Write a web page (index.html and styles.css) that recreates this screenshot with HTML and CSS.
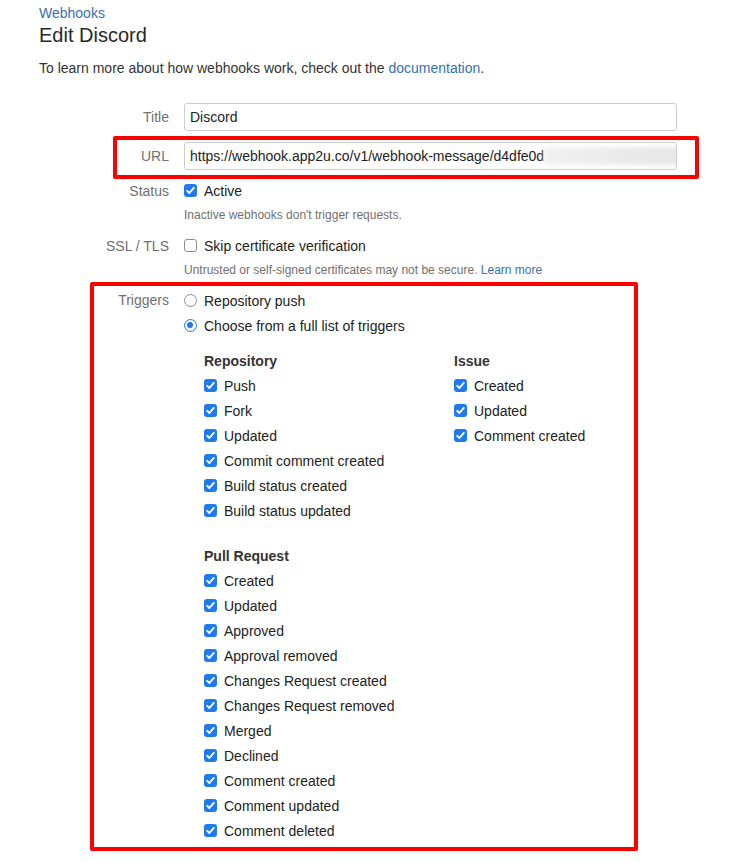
FILE: index.html
```html
<!DOCTYPE html>
<html>
<head>
<meta charset="utf-8">
<link rel="stylesheet" href="styles.css">
</head>
<body>
<div class="page">
  <a class="crumb" href="#">Webhooks</a>
  <h1 class="title">Edit Discord</h1>
  <p class="intro">To learn more about how webhooks work, check out the <a href="#">documentation</a>.</p>

  <div class="form">
    <div class="row">
      <div class="label field-label">Title</div>
      <div class="field"><div class="input">Discord</div></div>
    </div>
    <div class="row row-url highlight">
      <div class="label field-label">URL</div>
      <div class="field"><div class="input">https://webhook.app2u.co/v1/webhook-message/d4dfe0d<span class="blur"></span></div></div>
    </div>
    <div class="row row-status">
      <div class="label">Status</div>
      <div class="field">
        <div class="opt"><span class="cb on"><svg viewBox="0 0 13 13"><path d="M3.2 6.8 L5.4 9 L9.8 3.9" /></svg></span>Active</div>
        <div class="help">Inactive webhooks don't trigger requests.</div>
      </div>
    </div>
    <div class="row row-ssl">
      <div class="label">SSL / TLS</div>
      <div class="field">
        <div class="opt"><span class="cb"></span>Skip certificate verification</div>
        <div class="help">Untrusted or self-signed certificates may not be secure. <a href="#">Learn more</a></div>
      </div>
    </div>
    <div class="row row-triggers highlight">
      <div class="label trig-label">Triggers</div>
      <div class="field">
        <div class="item"><span class="radio"></span>Repository push</div>
        <div class="item"><span class="radio on"></span>Choose from a full list of triggers</div>
        <div class="groups">
          <div class="group">
            <div class="item head">Repository</div>
            <div class="item"><span class="cb on"><svg viewBox="0 0 13 13"><path d="M3.2 6.8 L5.4 9 L9.8 3.9" /></svg></span>Push</div>
            <div class="item"><span class="cb on"><svg viewBox="0 0 13 13"><path d="M3.2 6.8 L5.4 9 L9.8 3.9" /></svg></span>Fork</div>
            <div class="item"><span class="cb on"><svg viewBox="0 0 13 13"><path d="M3.2 6.8 L5.4 9 L9.8 3.9" /></svg></span>Updated</div>
            <div class="item"><span class="cb on"><svg viewBox="0 0 13 13"><path d="M3.2 6.8 L5.4 9 L9.8 3.9" /></svg></span>Commit comment created</div>
            <div class="item"><span class="cb on"><svg viewBox="0 0 13 13"><path d="M3.2 6.8 L5.4 9 L9.8 3.9" /></svg></span>Build status created</div>
            <div class="item"><span class="cb on"><svg viewBox="0 0 13 13"><path d="M3.2 6.8 L5.4 9 L9.8 3.9" /></svg></span>Build status updated</div>
          </div>
          <div class="group">
            <div class="item head">Issue</div>
            <div class="item"><span class="cb on"><svg viewBox="0 0 13 13"><path d="M3.2 6.8 L5.4 9 L9.8 3.9" /></svg></span>Created</div>
            <div class="item"><span class="cb on"><svg viewBox="0 0 13 13"><path d="M3.2 6.8 L5.4 9 L9.8 3.9" /></svg></span>Updated</div>
            <div class="item"><span class="cb on"><svg viewBox="0 0 13 13"><path d="M3.2 6.8 L5.4 9 L9.8 3.9" /></svg></span>Comment created</div>
          </div>
          <div class="group group-pr">
            <div class="item head">Pull Request</div>
            <div class="item"><span class="cb on"><svg viewBox="0 0 13 13"><path d="M3.2 6.8 L5.4 9 L9.8 3.9" /></svg></span>Created</div>
            <div class="item"><span class="cb on"><svg viewBox="0 0 13 13"><path d="M3.2 6.8 L5.4 9 L9.8 3.9" /></svg></span>Updated</div>
            <div class="item"><span class="cb on"><svg viewBox="0 0 13 13"><path d="M3.2 6.8 L5.4 9 L9.8 3.9" /></svg></span>Approved</div>
            <div class="item"><span class="cb on"><svg viewBox="0 0 13 13"><path d="M3.2 6.8 L5.4 9 L9.8 3.9" /></svg></span>Approval removed</div>
            <div class="item"><span class="cb on"><svg viewBox="0 0 13 13"><path d="M3.2 6.8 L5.4 9 L9.8 3.9" /></svg></span>Changes Request created</div>
            <div class="item"><span class="cb on"><svg viewBox="0 0 13 13"><path d="M3.2 6.8 L5.4 9 L9.8 3.9" /></svg></span>Changes Request removed</div>
            <div class="item"><span class="cb on"><svg viewBox="0 0 13 13"><path d="M3.2 6.8 L5.4 9 L9.8 3.9" /></svg></span>Merged</div>
            <div class="item"><span class="cb on"><svg viewBox="0 0 13 13"><path d="M3.2 6.8 L5.4 9 L9.8 3.9" /></svg></span>Declined</div>
            <div class="item"><span class="cb on"><svg viewBox="0 0 13 13"><path d="M3.2 6.8 L5.4 9 L9.8 3.9" /></svg></span>Comment created</div>
            <div class="item"><span class="cb on"><svg viewBox="0 0 13 13"><path d="M3.2 6.8 L5.4 9 L9.8 3.9" /></svg></span>Comment updated</div>
            <div class="item"><span class="cb on"><svg viewBox="0 0 13 13"><path d="M3.2 6.8 L5.4 9 L9.8 3.9" /></svg></span>Comment deleted</div>
          </div>
        </div>
      </div>
    </div>
  </div>
</div>
</body>
</html>
```

FILE: styles.css
```css
html, body {
  margin: 0;
  padding: 0;
  background: #ffffff;
}
body {
  font-family: "Liberation Sans", Arial, sans-serif;
  font-size: 14px;
  color: #333333;
}
a {
  color: #3572b0;
  text-decoration: none;
}
.page {
  padding: 3px 0 19px 39px;
}
.crumb {
  display: block;
  font-size: 14px;
  line-height: 20px;
}
.title {
  margin: 0;
  font-size: 20px;
  font-weight: normal;
  line-height: 24px;
  color: #292929;
}
.intro {
  margin: 11px 0 0;
  line-height: 20px;
}
.form {
  margin-top: 25px;
  width: 638px;
}
.row {
  display: grid;
  grid-template-columns: 130px 493px;
  column-gap: 15px;
  position: relative;
}
.label {
  text-align: right;
  color: #707070;
  line-height: 20px;
}
.field-label {
  line-height: 28px;
}
.trig-label {
  line-height: 25px;
}
.input {
  height: 26px;
  border: 1px solid #cccccc;
  border-radius: 3px;
  padding-left: 5px;
  line-height: 26px;
  white-space: nowrap;
  overflow: hidden;
  color: #222222;
}
.blur {
  display: inline-block;
  vertical-align: middle;
  width: 256px;
  height: 18px;
  margin-top: -3px;
  background: linear-gradient(90deg, #f1f1f1, #e8e8e8 40%, #e9e9e9 80%, #f3f3f3);
  filter: blur(2px);
}
.row-url {
  margin-top: 11px;
}
.row-status {
  margin-top: 11px;
}
.row-ssl {
  margin-top: 13px;
}
.row-triggers {
  margin-top: 10px;
}
.opt {
  display: flex;
  align-items: center;
  height: 20px;
  color: #222222;
}
.help {
  margin-top: 6px;
  font-size: 12px;
  line-height: 16px;
  color: #707070;
}
.item {
  display: flex;
  align-items: center;
  height: 25px;
  color: #222222;
  white-space: nowrap;
}
.head {
  font-weight: bold;
  color: #333333;
}
.groups {
  display: grid;
  grid-template-columns: 250px 243px;
  margin-top: 10px;
  padding-left: 20px;
}
.group-pr {
  margin-top: 20px;
}
.cb {
  flex: none;
  width: 13px;
  height: 13px;
  box-sizing: border-box;
  border: 1px solid #8c8c8c;
  border-radius: 3px;
  background: #ffffff;
  margin-right: 7px;
  position: relative;
  top: -0.5px;
}
.cb.on {
  border: none;
  background: #1f7aef;
}
.cb svg {
  display: block;
  width: 13px;
  height: 13px;
}
.cb svg path {
  fill: none;
  stroke: #ffffff;
  stroke-width: 1.9;
  stroke-linecap: round;
  stroke-linejoin: round;
}
.radio {
  flex: none;
  width: 13px;
  height: 13px;
  box-sizing: border-box;
  border: 1px solid #8c8c8c;
  border-radius: 50%;
  background: #ffffff;
  margin-right: 7px;
  position: relative;
  top: -0.5px;
}
.radio.on {
  border: 1.5px solid #1f7aef;
}
.radio.on::after {
  content: "";
  position: absolute;
  left: 2px;
  top: 2px;
  width: 6px;
  height: 6px;
  border-radius: 50%;
  background: #1f7aef;
}
.highlight::after {
  content: "";
  position: absolute;
  border: 4px solid #ff0000;
  border-radius: 2px;
  pointer-events: none;
}
.row-url::after {
  top: -6px;
  bottom: -9px;
  left: 74px;
  right: -22px;
}
.row-triggers::after {
  top: -6px;
  bottom: -8px;
  left: 51px;
  right: 39px;
}
```
